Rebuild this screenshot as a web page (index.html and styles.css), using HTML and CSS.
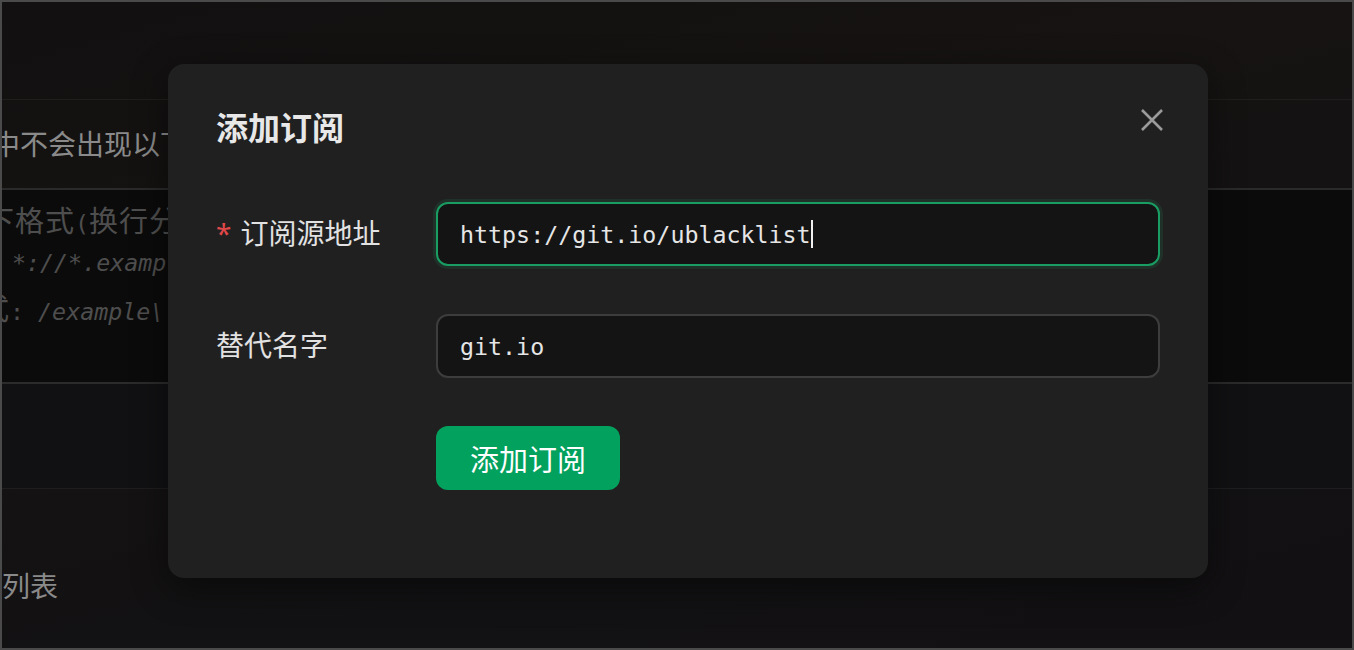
FILE: index.html
```html
<!DOCTYPE html>
<html lang="zh-CN">
<head>
<meta charset="utf-8">
<title>添加订阅</title>
<link rel="stylesheet" href="styles.css">
</head>
<body>
<div class="page">
  <div class="page-top"></div>
  <section class="page-desc">
    <p class="desc-text">在搜索结果中不会出现以下网站</p>
  </section>
  <section class="page-code">
    <div class="code-line line-1"><span class="wide">请使用以下格式</span>(<span class="wide">换行分隔</span>)<span class="wide">：</span></div>
    <div class="code-line line-2"><em>*://*.example.com/*</em></div>
    <div class="code-line line-3"><span class="wide">正则表达式</span>: <em>/example\.(net|org)/</em></div>
  </section>
  <section class="page-blank"></section>
  <section class="page-list">
    <p class="list-text">订阅列表</p>
  </section>
</div>

<div class="modal" role="dialog" aria-label="添加订阅">
  <header class="modal-head">
    <h2 class="modal-title">添加订阅</h2>
    <button class="modal-close" aria-label="关闭">
      <svg viewBox="0 0 24 24" width="24" height="24"><path d="M2 2 L22 22 M22 2 L2 22" stroke="#9b9b9b" stroke-width="2.6" fill="none"/></svg>
    </button>
  </header>
  <div class="form">
    <div class="form-row">
      <label class="form-label"><span class="req">*</span>订阅源地址</label>
      <div class="field field-focus"><span class="field-text">https://git.io/ublacklist</span><span class="caret"></span></div>
    </div>
    <div class="form-row">
      <label class="form-label">替代名字</label>
      <div class="field"><span class="field-text">git.io</span></div>
    </div>
    <div class="form-actions">
      <button class="btn-primary">添加订阅</button>
    </div>
  </div>
</div>
</body>
</html>
```

FILE: styles.css
```css
html, body {
  margin: 0;
  padding: 0;
}
body {
  width: 1354px;
  height: 650px;
  box-sizing: border-box;
  border: 2px solid #4a4a4a;
  overflow: hidden;
  position: relative;
  background: linear-gradient(165deg, #121010 0%, #161312 35%, #121113 70%, #121012 100%);
  font-family: "Noto Sans", "Noto Sans CJK SC", sans-serif;
}
.page {
  width: 100%;
}
.page-top {
  height: 97px;
  border-bottom: 1px solid #201e1d;
}
.page-desc {
  height: 88px;
  border-bottom: 2px solid #2a2a2a;
}
.desc-text {
  margin: 0 0 0 -150px;
  padding-top: 23px;
  font-size: 28px;
  line-height: 40px;
  color: #8a8a8a;
  white-space: nowrap;
  font-family: "Noto Sans CJK SC", sans-serif;
}
.page-code {
  height: 185px;
  padding-top: 7px;
  background: #0b0b0b;
  border-bottom: 2px solid #2b2b2b;
  font-family: "DejaVu Sans Mono", monospace;
  font-size: 23.3px;
  color: #4e4e4e;
}
.code-line {
  height: 44px;
  line-height: 44px;
  white-space: nowrap;
}
.code-line em {
  font-style: italic;
}
.wide {
  font-family: "Noto Sans CJK SC", sans-serif;
  font-size: 29px;
  letter-spacing: 1px;
}
.line-1 { margin-left: -137px; }
.line-2 { margin-left: 10px; }
.line-3 { margin-left: -142px; }
.page-blank {
  height: 104px;
  border-bottom: 1px solid #1e1e20;
  background: #111113;
}
.page-list {
  padding-top: 76px;
}
.list-text {
  margin: 0 0 0 -56px;
  font-size: 28px;
  line-height: 40px;
  color: #8a8a8a;
  font-family: "Noto Sans CJK SC", sans-serif;
}

.modal {
  position: absolute;
  left: 166px;
  top: 62px;
  width: 1040px;
  height: 514px;
  box-sizing: border-box;
  padding: 48px;
  background: #202020;
  border-radius: 16px;
  box-shadow: 0 10px 36px rgba(0, 0, 0, 0.45);
  color: #e4e4e4;
  font-family: "Noto Sans", "Noto Sans CJK SC", sans-serif;
}
.modal-head {
  display: flex;
  justify-content: space-between;
  align-items: flex-start;
  height: 32px;
}
.modal-title {
  margin: 0;
  font-size: 32px;
  line-height: 28px;
  font-weight: 700;
  color: #e8e8e8;
  font-family: "Noto Sans CJK SC", sans-serif;
}
.modal-close {
  margin: -4px -4px 0 0;
  padding: 0;
  width: 24px;
  height: 24px;
  border: 0;
  background: none;
  display: block;
}
.modal-close svg {
  display: block;
}
.form {
  margin-top: 58px;
}
.form-row {
  display: flex;
  align-items: center;
  margin-bottom: 48px;
}
.form-label {
  width: 220px;
  flex: none;
  font-size: 28px;
  line-height: 40px;
  padding-bottom: 3px;
  color: #e2e2e2;
  font-family: "Noto Sans", "Noto Sans CJK SC", sans-serif;
}
.req {
  color: #e0484a;
  margin-right: 9px;
}
.field {
  flex: 1;
  height: 64px;
  box-sizing: border-box;
  border: 2px solid #3d3d3d;
  border-radius: 12px;
  background: #141414;
  padding: 0 22px;
  display: flex;
  align-items: center;
  font-family: "DejaVu Sans Mono", monospace;
  font-size: 23.3px;
  color: #e6e6e6;
}
.field-focus {
  border-color: #1a9d63;
  box-shadow: 0 0 0 3px rgba(26, 157, 99, 0.14);
}
.field-text {
  white-space: pre;
}
.caret {
  display: inline-block;
  width: 2px;
  height: 28px;
  background: #f0f0f0;
}
.form-actions {
  padding-left: 220px;
}
.btn-primary {
  width: 184px;
  height: 64px;
  border: 0;
  border-radius: 12px;
  background: #03a15e;
  color: #ffffff;
  font-size: 29px;
  font-family: "Noto Sans CJK SC", sans-serif;
  padding: 0;
  display: block;
}
```
